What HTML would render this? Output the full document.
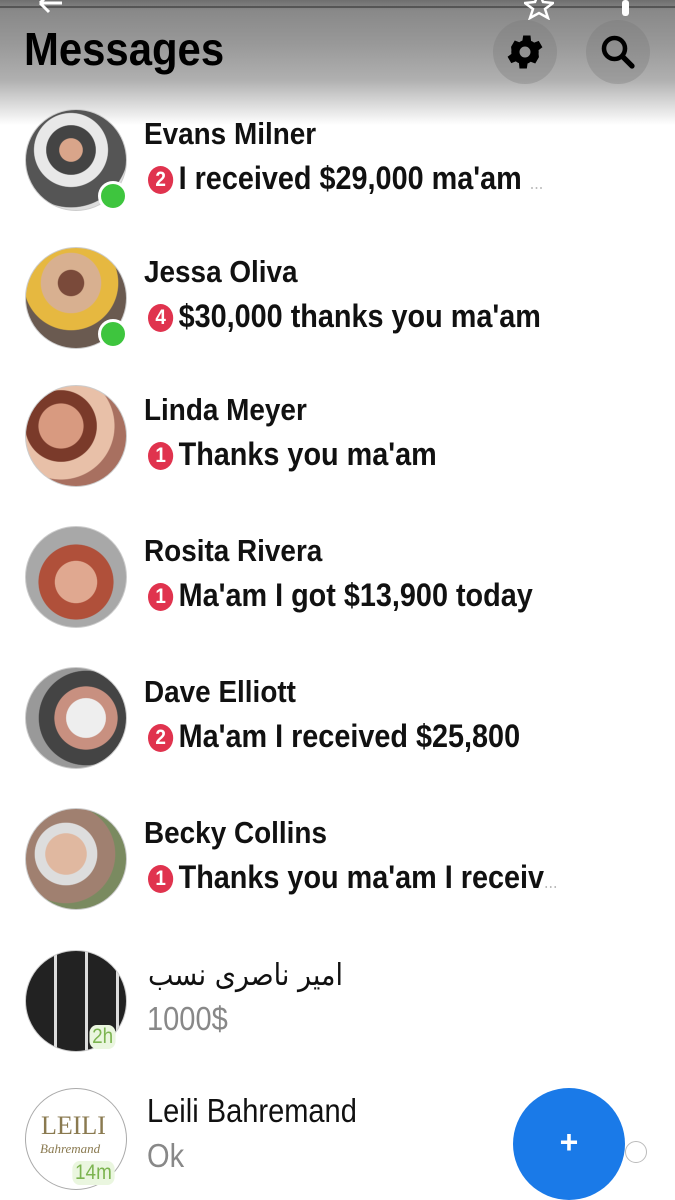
<!DOCTYPE html><html><head><style>
body{margin:0;width:675px;height:1200px;overflow:hidden;background:#fff;font-family:"Liberation Sans",sans-serif;position:relative}
.hdr{position:absolute;left:0;top:0;width:675px;height:130px;background:linear-gradient(#6f6f6f 0px,#888 10px,#999 45px,#b0b0b0 80px,#fff 125px)}
.t{position:absolute;left:24px;top:22px;font:bold 46px "Liberation Sans",sans-serif;color:#000;transform:scaleX(.91);transform-origin:left}
.ib{position:absolute;width:64px;height:64px;border-radius:50%;background:rgba(120,120,120,.35)}
.av{position:absolute;left:25px;width:100px;height:100px;border-radius:50%;border:1px solid #ccc;overflow:hidden}
.n{position:absolute;left:144px;font-weight:bold;font-size:31px;color:#111;transform:scaleX(.9);transform-origin:left;white-space:nowrap}
.m{position:absolute;left:148px;font-weight:bold;font-size:32px;color:#111;white-space:nowrap;transform:scaleX(.9);transform-origin:left}
.b{display:inline-block;width:28px;height:28px;border-radius:50%;background:#e0334e;color:#fff;font-size:21px;text-align:center;line-height:28px;vertical-align:3px;margin-right:6px}
.on{position:absolute;width:24px;height:24px;border-radius:50%;background:#3ec53e;border:3px solid #fff}
.tm{position:absolute;background:#eaf6df;color:#7cb450;font-size:21px;padding:0 3px;border-radius:8px;transform:scaleX(.9)}
.g{position:absolute;left:147px;font-size:33px;transform:scaleX(.88);transform-origin:left;white-space:nowrap}
</style></head><body>
<div class="hdr"></div>
<div style="position:absolute;left:0;top:6px;width:675px;height:2px;background:#555"></div>
<svg style="position:absolute;left:36px;top:0" width="30" height="16"><path d="M4 3H26M4 3L13 -6M4 3L13 12" stroke="#fff" stroke-width="3" fill="none"/></svg>
<svg style="position:absolute;left:524px;top:0" width="30" height="20"><path d="M15 -8L19 2L29 3L21 9L24 18L15 13L6 18L9 9L1 3L11 2Z" stroke="#fff" stroke-width="2.5" fill="none"/></svg>
<div style="position:absolute;left:622px;top:0;width:7px;height:16px;background:#fff;border-radius:3px"></div>
<div class="t">Messages</div>
<div class="ib" style="left:493px;top:20px"></div>
<div class="ib" style="left:586px;top:20px"></div>
<svg style="position:absolute;left:503px;top:30px" width="44" height="44" viewBox="0 0 24 24"><path fill="#000" d="M19.4 13a7.5 7.5 0 0 0 0-2l2.1-1.6-2-3.5-2.5 1a7 7 0 0 0-1.7-1L15 3h-4l-.4 2.7a7 7 0 0 0-1.7 1l-2.5-1-2 3.5L4.6 11a7.5 7.5 0 0 0 0 2l-2.1 1.6 2 3.5 2.5-1a7 7 0 0 0 1.7 1L9 21h4l.4-2.7a7 7 0 0 0 1.7-1l2.5 1 2-3.5zM12 15a3 3 0 1 1 0-6 3 3 0 0 1 0 6z"/></svg>
<svg style="position:absolute;left:597px;top:31px" width="42" height="42" viewBox="0 0 24 24"><circle cx="10" cy="10" r="6" stroke="#000" stroke-width="2.6" fill="none"/><path d="M14.5 14.5L20 20" stroke="#000" stroke-width="3" stroke-linecap="round"/></svg>

<div class="av" style="top:109px;background:radial-gradient(circle at 45% 40%,#d9a58a 0 14%,#444 15% 30%,#e8e8e8 31% 45%,#555 46% 70%,#ddd 71%)"></div><div class="on" style="left:98px;top:181px"></div>
<div class="n" style="top:116px">Evans Milner</div>
<div class="m" style="top:160px"><span class="b">2</span>I received $29,000 ma'am <span style="color:#bbb;font-size:18px;font-weight:normal">...</span></div>

<div class="av" style="top:247px;background:radial-gradient(circle at 45% 35%,#7a4a3a 0 15%,#d8b090 16% 35%,#e6b840 36% 55%,#6a5a50 56%)"></div><div class="on" style="left:98px;top:319px"></div>
<div class="n" style="top:254px">Jessa Oliva</div>
<div class="m" style="top:298px"><span class="b">4</span>$30,000 thanks you ma'am</div>

<div class="av" style="top:385px;background:radial-gradient(circle at 35% 40%,#d89a80 0 25%,#7a3a2a 26% 40%,#e8c0a8 41% 60%,#a87060 61%)"></div>
<div class="n" style="top:392px">Linda Meyer</div>
<div class="m" style="top:436px"><span class="b">1</span>Thanks you ma'am</div>

<div class="av" style="top:526px;background:radial-gradient(circle at 50% 55%,#e0a890 0 28%,#b0503a 29% 50%,#a8a8a8 51%)"></div>
<div class="n" style="top:533px">Rosita Rivera</div>
<div class="m" style="top:577px"><span class="b">1</span>Ma'am I got $13,900 today</div>

<div class="av" style="top:667px;background:radial-gradient(circle at 60% 50%,#eee 0 25%,#c89080 26% 40%,#444 41% 60%,#999 61%)"></div>
<div class="n" style="top:674px">Dave Elliott</div>
<div class="m" style="top:718px"><span class="b">2</span>Ma'am I received $25,800</div>

<div class="av" style="top:808px;background:radial-gradient(circle at 40% 45%,#e0b8a0 0 25%,#ddd 26% 38%,#a08070 39% 60%,#7a8a60 61%)"></div>
<div class="n" style="top:815px">Becky Collins</div>
<div class="m" style="top:859px"><span class="b">1</span>Thanks you ma'am I receiv<span style="color:#bbb;font-size:18px;font-weight:normal">...</span></div>

<div class="av" style="top:950px;background:repeating-linear-gradient(90deg,#222 0 28px,#ddd 28px 31px),#333"></div><div class="tm" style="left:88px;top:1025px">2h</div>
<div style="position:absolute;left:148px;top:958px;font-size:30px;color:#111;font-family:'DejaVu Sans',sans-serif;transform:scaleX(.9);transform-origin:left" dir="rtl">امیر ناصری نسب</div>
<div class="g" style="top:1000px;color:#888">1000$</div>

<div class="av" style="top:1088px;background:#fff;border-color:#aaa"><div style="position:absolute;left:15px;top:22px;font:26px 'Liberation Serif',serif;color:#8a7a50">LEILI</div><div style="position:absolute;left:14px;top:52px;font:italic 13px 'Liberation Serif',serif;color:#8a7a50">Bahremand</div></div><div class="tm" style="left:70px;top:1161px">14m</div>
<div class="g" style="top:1092px;color:#111">Leili Bahremand</div>
<div class="g" style="top:1137px;color:#888">Ok</div>
<div style="position:absolute;left:513px;top:1088px;width:112px;height:112px;border-radius:50%;background:#1a7ae8;color:#fff;font:bold 32px 'Liberation Sans';text-align:center;line-height:108px">+</div>
<div style="position:absolute;left:625px;top:1141px;width:20px;height:20px;border-radius:50%;border:1px solid #bbb"></div>
</body></html>
